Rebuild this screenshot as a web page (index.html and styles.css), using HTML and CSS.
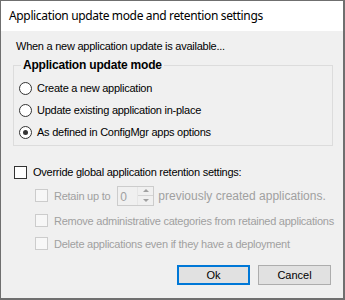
FILE: index.html
```html
<!DOCTYPE html>
<html lang="en">
<head>
  <meta charset="UTF-8" />
  <title>Application update mode and retention settings</title>
  <link rel="stylesheet" href="styles.css">
</head>
<body>
  <div class="window">
    <div class="titlebar">Application update mode and retention settings</div>

    <div class="content">
      <p class="intro">When a new application update is available...</p>

      <fieldset class="group">
        <legend>Application update mode</legend>
        <label class="row radio-row"><span class="radio"></span>Create a new application</label>
        <label class="row radio-row"><span class="radio"></span>Update existing application in-place</label>
        <label class="row radio-row"><span class="radio checked"></span>As defined in ConfigMgr apps options</label>
      </fieldset>

      <label class="row override"><span class="check"></span>Override global application retention settings:</label>

      <div class="sub sub-1 disabled">
        <span class="check"></span>
        <span>Retain up to</span>
        <div class="spin">
          <span class="spin-value">0</span>
          <div class="spin-buttons">
            <span class="spin-up"></span>
            <span class="spin-down"></span>
          </div>
        </div>
        <span class="big">previously created applications.</span>
      </div>
      <div class="sub sub-2 disabled"><span class="check"></span>Remove administrative categories from retained applications</div>
      <div class="sub sub-3 disabled"><span class="check"></span>Delete applications even if they have a deployment</div>

      <div class="actions">
        <button class="btn btn-default">Ok</button>
        <button class="btn">Cancel</button>
      </div>
    </div>
  </div>
</body>
</html>
```

FILE: styles.css
```css
body {
  margin: 0;
  background: #f0f0f0;
  font-family: 'Liberation Sans', Arial, sans-serif;
  font-size: 11px;
  letter-spacing: -0.25px;
  color: #000;
}

.window {
  width: 345px;
  height: 300px;
  box-sizing: border-box;
  border: solid #6f6f6f;
  border-width: 1px 2px 2px 1px;
  background: #f0f0f0;
  display: flex;
  flex-direction: column;
}

.titlebar {
  height: 30px;
  flex-shrink: 0;
  background: #fff;
  padding-left: 8px;
  font-family: 'Noto Sans', 'Open Sans', sans-serif;
  font-size: 12px;
  letter-spacing: -0.35px;
  line-height: 30px;
}

.content {
  display: flex;
  flex-direction: column;
  padding: 0 12px 0 12px;
  white-space: nowrap;
}

.intro {
  margin: 9px 0 0 3px;
  line-height: 13px;
}

.group {
  margin: 5px 0 0 0;
  padding: 0 0 2px 5px;
  border: 1px solid #dcdcdc;
  width: 320px;
  box-sizing: border-box;
}

.group legend {
  margin-left: 2px;
  padding: 0 2px;
  font-weight: bold;
  font-size: 12px;
  letter-spacing: -0.2px;
  line-height: 14px;
}

.row {
  display: flex;
  align-items: center;
  height: 22px;
}

.radio-row:first-of-type {
  margin-top: 5px;
}

.radio {
  width: 11px;
  height: 11px;
  border: 1px solid #333;
  border-radius: 50%;
  background: #fff;
  margin-right: 5px;
  display: flex;
  align-items: center;
  justify-content: center;
  flex-shrink: 0;
}

.radio.checked::after {
  content: "";
  width: 5px;
  height: 5px;
  border-radius: 50%;
  background: #333;
}

.check {
  width: 11px;
  height: 11px;
  border: 1px solid #333;
  background: #fff;
  margin-right: 6px;
  flex-shrink: 0;
}

.override {
  margin-top: 15px;
  margin-left: 1px;
}

.sub {
  display: flex;
  align-items: center;
  height: 23px;
  margin-left: 22px;
  margin-right: -12px;
}

.sub-1 { margin-top: 1px; }
.sub-2 { margin-top: 2px; }

.disabled {
  color: #a0a0a0;
}

.disabled .check {
  border-color: #cccccc;
  background: #f7f7f7;
}

.spin {
  width: 37px;
  height: 20px;
  box-sizing: border-box;
  border: 1px solid #cccccc;
  margin: 0 4px 0 7px;
  display: flex;
  justify-content: space-between;
}

.spin-value {
  padding: 3px 0 0 2px;
  font-size: 12px;
}

.spin-buttons {
  width: 15px;
  display: flex;
  flex-direction: column;
  border-left: 1px solid #e6e6e6;
}

.spin-up,
.spin-down {
  flex: 1;
  display: flex;
  align-items: center;
  justify-content: center;
}

.spin-up {
  border-bottom: 1px solid #d4d4d4;
}

.spin-up::after {
  content: "";
  border: 3px solid transparent;
  border-bottom: 3px solid #a0a0a0;
  border-top: 0;
}

.spin-down::after {
  content: "";
  border: 3px solid transparent;
  border-top: 3px solid #a0a0a0;
  border-bottom: 0;
}

.big {
  font-size: 12px;
  letter-spacing: 0;
}

.actions {
  display: flex;
  justify-content: flex-end;
  gap: 8px;
  margin-top: 10px;
}

.btn {
  width: 73px;
  height: 20px;
  box-sizing: border-box;
  border: 1px solid #adadad;
  background: #e1e1e1;
  font-family: 'Liberation Sans', Arial, sans-serif;
  font-size: 11px;
  color: #000;
  padding: 0;
}

.btn-default {
  border: 2px solid #0078d7;
}
```
